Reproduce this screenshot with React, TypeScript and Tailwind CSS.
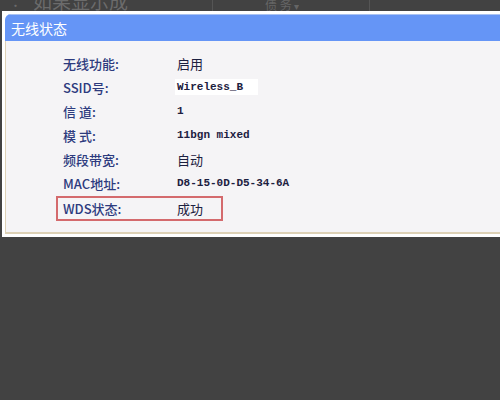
import React from 'react';

const rows = [
  { label: '无线功能:', value: '启用', mono: false },
  { label: 'SSID号:', value: 'Wireless_B', mono: true, box: true },
  { label: '信 道:', value: '1', mono: true },
  { label: '模 式:', value: '11bgn mixed', mono: true },
  { label: '频段带宽:', value: '自动', mono: false },
  { label: 'MAC地址:', value: 'D8-15-0D-D5-34-6A', mono: true },
];

const cjk = { fontFamily: '"Noto Sans CJK SC", "Noto Sans", sans-serif' };
const mono = { fontFamily: '"Liberation Mono", "Noto Sans CJK SC", monospace' };

export default function App() {
  return (
    <div className="w-[500px] h-[400px] bg-[#424242] overflow-hidden" style={cjk}>
      {/* page behind, cut off at the top */}
      <div className="h-[11px] overflow-hidden flex items-end text-[#7d7d7d]">
        <div className="flex w-full items-end">
          <span className="ml-[10px] text-[11px] leading-none text-[#6a6a6a]">•</span>
          <span className="ml-[12px] text-[19px] leading-none mb-[1px] opacity-70">如果显示成</span>
          <div className="ml-[84px] w-px h-[11px] bg-[#555]" />
          <span className="ml-[52px] text-[12px] leading-none opacity-60">债 务</span>
          <span className="ml-[2px] text-[10px] leading-none opacity-60">▾</span>
          <div className="ml-[70px] w-px h-[11px] bg-[#555]" />
        </div>
      </div>

      {/* dialog frame */}
      <div className="ml-[2px] bg-white pt-[3px] pl-[3px] pb-[3px]">
        <div className="rounded-tl-[6px] overflow-hidden">
          <div className="h-[27px] bg-[#6595f6] border-t border-[#a9c2f3] flex items-center pl-[6px]">
            <span className="text-white text-[14px] leading-none">无线状态</span>
          </div>
          <div className="h-[193px] bg-[#f5f4f6] border-l border-b-2 border-[#ddd1b6] pt-[10px]">
            {rows.map((r) => (
              <div key={r.label} className="ml-[50px] h-[24px] flex items-center pl-[7px]">
                <span className="w-[114px] text-[13px] text-[#2d3b7e] font-medium leading-none">{r.label}</span>
                <span
                  className={
                    'text-[#1c2040] leading-none ' +
                    (r.mono ? 'text-[11px] font-bold ' : 'text-[13px] ') +
                    (r.box ? 'bg-white w-[83px] h-[16px] flex items-center -ml-[2px] pl-[2px]' : '')
                  }
                  style={r.mono ? mono : cjk}
                >
                  {r.value}
                </span>
              </div>
            ))}
            <div className="ml-[50px] mt-[1px] w-[167px] h-[25px] flex items-center pl-[5px] border-2 border-[#d46a6d]">
              <span className="w-[114px] text-[13px] text-[#2d3b7e] font-medium leading-none">WDS状态:</span>
              <span className="text-[13px] text-[#1c2040] leading-none">成功</span>
            </div>
          </div>
        </div>
      </div>
    </div>
  );
}
